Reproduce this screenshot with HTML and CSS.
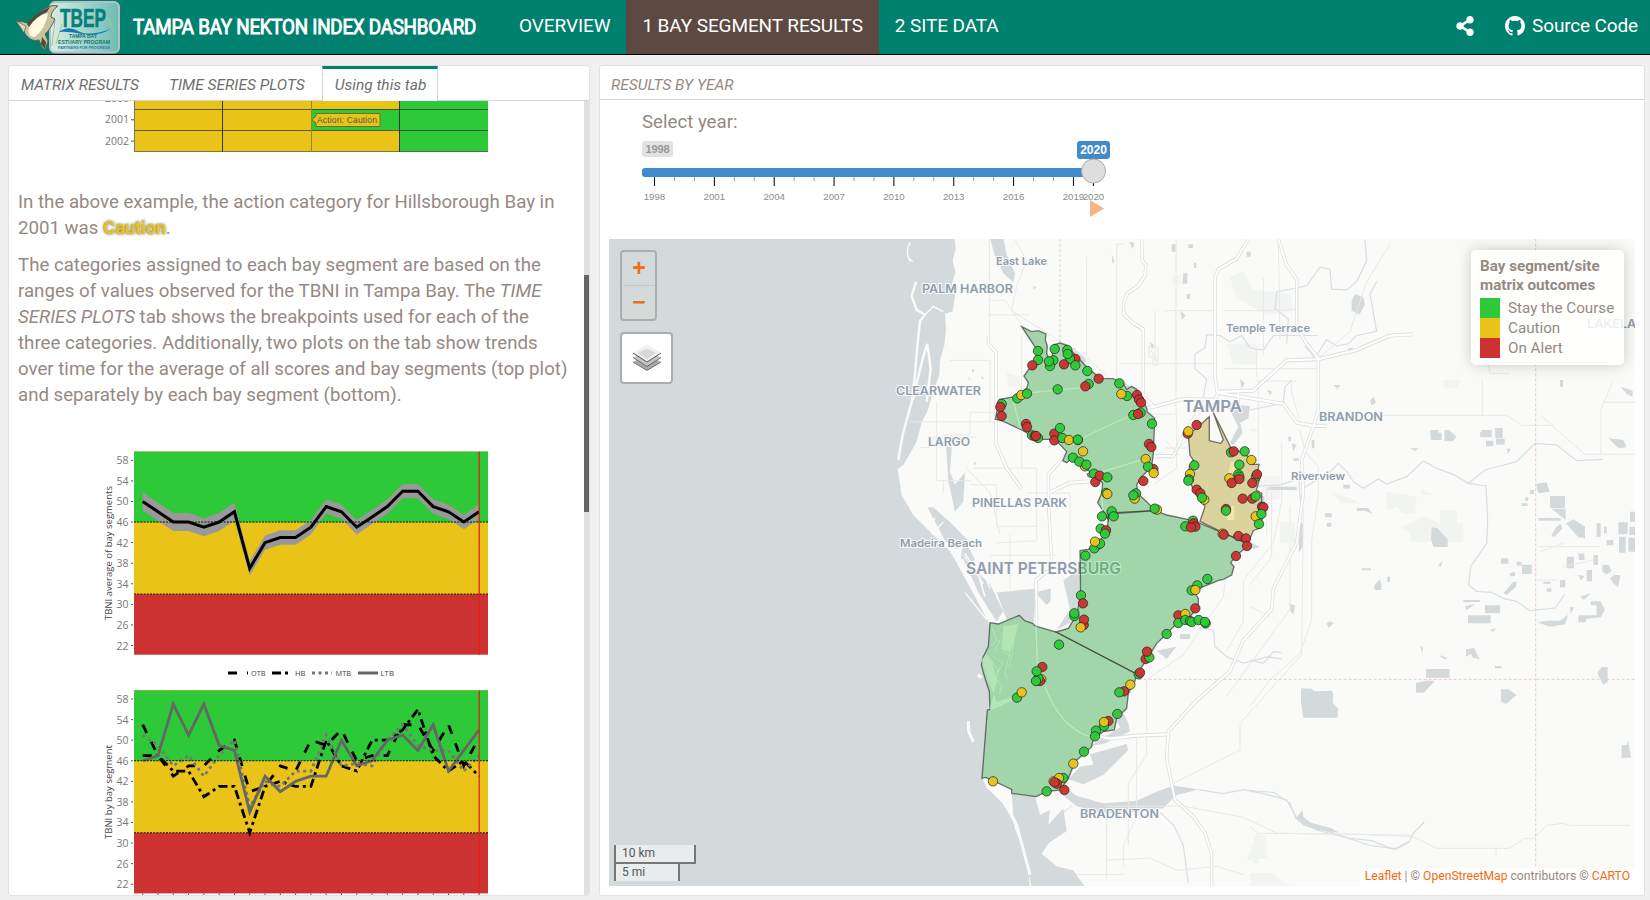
FILE: index.html
```html
<!DOCTYPE html>
<html lang="en">
<head>
<meta charset="utf-8">
<title>Tampa Bay Nekton Index Dashboard</title>
<link rel="stylesheet" href="styles.css">
</head>
<body>
<header class="navbar">
  <svg class="logo" width="106" height="54" viewBox="0 0 106 54">
    <defs><linearGradient id="badge" x1="0" x2="1"><stop offset="0" stop-color="#d9ede6"/><stop offset=".5" stop-color="#a4d6cd"/><stop offset="1" stop-color="#6cbcb4"/></linearGradient></defs>
    <rect x="35" y="2" width="69" height="50.5" rx="5" fill="url(#badge)" stroke="#b9bdc4" stroke-width="2"/>
    <path d="M37 46L40 20M41 44L47 24M98 31L92 14" stroke="#a9c58d" fill="none"/>
    <path d="M1 21L9 22L15 24Q20 14 31 8Q38 4 43 6Q36 11 36 17L40 19Q35 30 30 34L33 41L30 50Q26 47 24 40Q17 42 12 36Q8 33 10 27Z" fill="#c9c2a0" stroke="#615e4a"/>
    <path d="M14 27Q21 16 33 13Q31 28 20 37Q12 37 14 27Z" fill="#fffbe0"/>
    <path d="M12 24Q20 13 35 7L32 12Q20 17 14 27ZM27 37L31 42L30 49L26 44Z" fill="#4d4a3c"/>
    <path d="M1 21L11 26L9 33L6 28Z" fill="#ddd6b8" stroke="#615e4a" stroke-width=".6"/>
    <text x="45" y="27" class="logo-name" textLength="46" lengthAdjust="spacingAndGlyphs">TBEP</text>
    <path d="M44 32Q53 25 63 31T96 29Q82 37 67 34T44 32Z" fill="#1378b8"/>
    <text x="54" y="38" class="logo-sub" textLength="28" lengthAdjust="spacingAndGlyphs">TAMPA BAY</text>
    <text x="43" y="44" class="logo-sub" textLength="52" lengthAdjust="spacingAndGlyphs">ESTUARY PROGRAM</text>
    <text x="43" y="49" class="logo-tiny" textLength="52" lengthAdjust="spacingAndGlyphs">PARTNERS FOR PROGRESS</text>
  </svg>
  <h1 class="brand">TAMPA BAY NEKTON INDEX DASHBOARD</h1>
  <nav class="nav"><a>OVERVIEW</a><a class="active">1 BAY SEGMENT RESULTS</a><a>2 SITE DATA</a></nav>
  <div class="nav-right">
    <svg width="18" height="20" viewBox="0 0 448 512"><path fill="#fff" d="M352 320c-22.600 0-43.400 7.800-59.800 20.900l-102.500-64.100a96.600 96.600 0 0 0 0-41.600l102.500-64.100C308.600 184.200 329.400 192 352 192c53 0 96-43 96-96S405 0 352 0s-96 43-96 96c0 7.200.8 14.100 2.300 20.800l-102.500 64.100C139.400 167.800 118.600 160 96 160c-53 0-96 43-96 96s43 96 96 96c22.600 0 43.400-7.800 59.800-20.900l102.500 64.100A96.300 96.300 0 0 0 256 416c0 53 43 96 96 96s96-43 96-96-43-96-96-96z"/></svg>
    <a class="source"><svg width="20" height="20" viewBox="0 0 16 16"><path fill="#fff" d="M8 0C3.580 0 0 3.580 0 8c0 3.540 2.290 6.530 5.470 7.590.4.070.55-.17.55-.38 0-.19-.01-.82-.01-1.490-2.010.37-2.530-.49-2.690-.94-.09-.23-.48-.94-.82-1.130-.28-.15-.68-.52-.01-.53.63-.01 1.080.58 1.230.82.72 1.210 1.870.87 2.330.66.070-.52.280-.87.510-1.070-1.780-.2-3.640-.89-3.640-3.950 0-.87.31-1.590.82-2.150-.08-.2-.36-1.020.080-2.120 0 0 .67-.21 2.200.82.640-.18 1.320-.27 2-.27s1.360.09 2 .27c1.530-1.040 2.200-.82 2.200-.82.440 1.100.160 1.920.080 2.120.51.56.82 1.270.82 2.150 0 3.070-1.870 3.750-3.650 3.950.29.25.54.73.54 1.480 0 1.070-.01 1.930-.01 2.200 0 .21.150.46.550.38A8.010 8.010 0 0 0 16 8c0-4.420-3.580-8-8-8z"/></svg><span>Source Code</span></a>
  </div>
</header>
<main class="columns">
  <section class="panel guide">
    <div class="tabs"><a>MATRIX RESULTS</a><a>TIME SERIES PLOTS</a><a class="current">Using this tab</a></div>
    <div class="guide-body">
      <div class="guide-content">
        <svg class="plot" id="matrix" width="420" height="52" viewBox="90 101 420 52"></svg>
        <p class="first">In the above example, the action category for Hillsborough Bay in 2001 was <b class="caution">Caution</b>.</p>
        <p>The categories assigned to each bay segment are based on the ranges of values observed for the TBNI in Tampa Bay. The <i>TIME SERIES PLOTS</i> tab shows the breakpoints used for each of the three categories. Additionally, two plots on the tab show trends over time for the average of all scores and bay segments (top plot) and separately by each bay segment (bottom).</p>
        <svg class="plot series" id="series" width="420" height="450" viewBox="90 445 420 450"></svg>
      </div>
      <div class="scrollbar"><div class="thumb"></div></div>
    </div>
  </section>
  <section class="panel results">
    <div class="panel-title">RESULTS BY YEAR</div>
    <div class="year">
      <label>Select year:</label>
      <svg id="slider" width="480" height="84" viewBox="635 136 480 84"></svg>
    </div>
    <div class="map">
      <svg class="tiles" width="1026" height="647" viewBox="609 239 1026 647">
        <defs>
          <path id="otb" d="M185 50L215 65L235 62L258 72L256 90L262 108L260 130L268 150L278 140L276 120L284 104L300 99L320 105L345 135L380 170L420 205L460 206L490 222L500 238L515 229L530 238L545 265L560 295L562 306L584 325L580 430L575 470L545 500L530 525L535 552L560 575L585 602L465 608L445 612L445 630L428 600L413 578L425 550L428 520L415 505L385 500L382 492L392 486L365 470L340 440L320 458L308 452L320 425L285 388L235 388L185 360L120 330L106 328L115 280L118 268L165 260L200 235L205 218L192 198L205 180L230 150L228 115Z"/>
          <path id="hb" d="M748 320V392L782 400L790 390L760 308L812 412L850 430L880 450L879 463L897 463L892 490L898 510L889 540L905 550L905 590L916 602L897 655L880 662L868 690L860 702L720 634L735 590L700 540L685 500L688 470L700 450L690 436L685 375Z"/>
          <path id="mtb" d="M445 42L585 32L620 45L700 62L865 130L862 140L830 165L812 188L822 200L815 225L790 238L780 240L700 272L715 295L715 320L690 350L650 370L620 402L590 430L560 480L530 522L288 396L325 385L350 345L362 290L360 152L385 148L400 138L430 110L443 80Z"/>
          <path id="ltb" d="M90 368L115 372L178 346L195 363L218 370L225 378L288 396L530 522L524 545L505 580L500 625L470 655L463 690L430 695L400 715L395 740L345 785L325 835L300 870L260 875L228 890L155 880V868L78 832L66 835L82 630L90 628L88 575L75 535L64 495L70 470L85 440Z"/>
          <g id="highways">
            <path d="M1075 8L1040 55L985 80L975 100V340L982 378"/>
            <path d="M1165 8L1190 70L1220 105V220L1250 260L1285 295V420L1270 460L1235 540L1240 620L1220 740L1150 850L1145 900L1060 975L1020 1050L920 1120L835 1195L830 1260L855 1360L910 1400L945 1440L965 1490V1568"/>
            <path d="M1570 237L1500 240L1400 275L1285 297L1190 300L1090 373L985 376L975 395L880 393L800 410L770 415M795 531H850L880 480L920 430L975 395"/>
            <path d="M755 8L757 60L768 70L765 95L745 120L712 138L700 165L703 190L730 210L760 225V385L790 410"/>
            <path d="M295 240V260L318 280V500L350 560L395 610"/>
            <path d="M530 525L475 575V640L485 780M475 620L540 595L600 592"/>
            <path d="M440 940L438 830L470 810L510 805"/>
            <path d="M982 378L1180 405L1220 450L1270 458L1310 458M1045 376V410"/>
            <path d="M615 1205L660 1212L740 1205L830 1202"/>
          </g>
        </defs>
        <rect class="land" x="609" y="239" width="1026" height="647"/>
        <g transform="translate(890 236) scale(.33333 .41465)">
          <g class="parks">
            <path d="M1020 100L1060 85L1090 130L1200 140L1210 180L1130 190L1040 150Z"/><path d="M1100 1440L1130 1450V1500L1070 1505ZM845 95h28v22h-28zM1010 260h90v50h-70zM350 330l40 10v20l-35 5zM1120 580h50v55h-45z"/>
          </g>
          <g class="water">
            <path d="M-850 0H193L197 30L188 60L197 88L185 115L196 140L188 182L165 187L168 225L163 263L150 300L148 335L130 375L112 423L95 450L80 496L40 552L23 562L35 625L70 673L130 721L180 760L195 781L250 862L295 930L300 945V1145L277 1308L290 1330L340 1370L368 1405L375 1430L395 1470L415 1530L420 1580H-850Z"/>
            <path d="M300 5H340L350 45L375 90L370 112L340 90L315 50ZM113 655L130 655L180 690L235 735L200 755L165 735ZM168 505L185 510L180 570L195 600L225 570L220 640L195 665L175 590ZM225 735L255 780L240 790L215 760ZM215 770L250 800L300 840L340 905L320 930L300 905L265 860ZM320 860L440 850L430 940L350 925ZM520 830L575 800V880L545 930L500 950L540 900ZM435 860L482 850V880L470 890Z"/>
            <path d="M500 1315L560 1350L640 1368L740 1362L800 1340L850 1325L925 1335L860 1348L820 1380L740 1390L640 1392L560 1375L520 1350Z"/>
            <path d="M365 1345L435 1352L450 1395L480 1385L475 1420L520 1380L530 1435L475 1465L455 1490L500 1520L550 1530L585 1570H425L400 1480L370 1400Z"/>
            <path d="M535 1310L570 1280L610 1275L600 1250L710 1225L715 1240L640 1300L580 1322ZM600 1230L690 1185L680 1170L700 1150L715 1175L720 1195L640 1225Z"/>
            <path d="M1010 405L1080 410L1075 440L1050 450L1058 475L1030 505L1020 498L1045 460ZM550 268L590 300L570 322L540 290ZM1385 155L1395 140L1420 148L1425 165L1408 190L1385 180ZM690 340L720 365L700 375ZM800 1000L860 990L830 1020ZM870 960h30v12h-30zM1100 615L1125 630L1115 650ZM640 570L655 580L650 600L635 595ZM1075 735L1110 750L1090 755Z"/>
            <path d="M1235 1090L1265 1095L1268 1100L1330 1102L1328 1125L1345 1140L1342 1162H1240L1233 1125Z"/>
            <path d="M665 42l8 20-6 5zM718 14l15 3-5 15zM845 20h12v18h-12zM880 90h12v25h-15zM890 140h10v12h-10zM872 180l15 12-12 10zM912 65h7v12h-7zM895 20h14v9h-14zM1070 38h12v12h-12zM780 255l14 9-8 10zM1050 345l14 10-9 14zM1195 885l20 6-9 20zM1310 935l10-5 4 10-8 5zM1455 840l16-12v22zM1375 270h14v9h-14zM1205 500l15 4-10 16zM1360 600h20v9h-20zM430 120l10 4-9 5zM245 320l8 3-4 8zM272 338l9 2-2 7zM235 340l5 2-2 7zM250 545l9 2-2 6zM215 760l9 14-11 8zM1130 370l16 5-5 10z"/>
          </g>
          <g class="shore">
            <path d="M78 110L65 145L80 178L105 190L90 205L82 265L75 335L65 400L38 480L25 540" stroke-width="2.500"/>
            <path d="M68 395L100 290L112 260L122 320L110 400" stroke-width="2.500"/>
            <path d="M235 1170L236 1195L250 1220M275 1065L264 1058M285 1310L340 1362L380 1420L400 1480L420 1540" stroke-width="3"/>
            <path d="M53 50L68 62M60 15Q45 35 60 62M105 190L130 170L160 182M265 775L300 850M255 790L285 870M225 765L280 840M110 705L135 680M125 720L160 690M225 860L290 925" stroke-width="1.500"/>
          </g>
          <g class="rivers"><path d="M1245 265L1275 295L1310 250L1340 265L1375 260L1400 240L1460 230L1440 140L1460 110M1425 8L1430 60L1400 110L1370 130L1325 128L1320 80L1290 75L1250 120L1160 135L1155 175L1195 200L1190 260M1285 240L1150 240L1120 275L1080 270L1055 240L1020 255L990 240L950 238L945 270L915 285V320L950 345L940 390M925 945L970 950L975 990L1010 1015L1060 1030L1130 1015L1175 1020M925 1335L1000 1345L1060 1335L1120 1345L1190 1360L1225 1410L1330 1440L1440 1470L1520 1478L1560 1460M810 1390L850 1420L880 1470L895 1560M1080 605L1170 600L1210 590M1225 570L1235 680M520 1390L545 1375"/></g>
          <g class="minor"><path d="M375 8L410 60L380 120L365 180L600 300L660 345M300 155H345L400 220M295 190H420M298 8V240M395 240V560M590 50V290M700 20H680V345M858 8V430M825 180H975M690 308H975M690 430H860V560L790 600M795 180V300M1120 100V290M1165 8L1170 250M1000 180H1120L1220 178M1000 320H1280M1100 350H1220M1100 270V340M1175 500V640L1150 740L1060 830V930L1010 1000M770 1070L880 1010L1000 870L1020 740M770 1070V1250L715 1320V1470M740 1205V1400L700 1470V1520M320 425H240V480H160M60 448H320M140 400V590H245M90 510H120L130 485H260M180 300H300V450M240 600H320V700H440M160 590V620M250 560H400M230 560L300 620L330 720M320 740L440 735V560H400M300 770H500M360 720V850M600 430V520M410 620H540V780M1560 1445L1410 1443L1160 1440L1060 1402L880 1375H650M650 1400V1550M650 1505L780 1500L860 1530L980 1520L1060 1540M1285 295L1380 230L1430 110L1500 20M1200 650V900L1010 1110M1050 1180V1240L850 1320M1050 1175L1235 1010L1240 660M960 690L1060 725M560 1540H700M1010 600H1130V720"/></g>
        </g>
        <g transform="translate(1250 380) scale(.33333)">
          <g class="parks"><path d="M410 335L500 350L495 400H460L440 380L410 390ZM455 440L520 410L570 430V390H620V430H640V485H480V460ZM90 425H135V490H90ZM515 325L550 345H510ZM250 340l50 15 30 15h-60zM580 0h50l-10 25h-40zM0 1400l30 50h-20zM0 1480H70L120 1518H0Z"/></g>
          <g class="water"><path d="M540 150h25v8h10v22h-32zM583 150h14l22 20-10 14h-26zM690 158l8-8h27v22h-34zM735 144h23v31h-22zM737 176h27v18h-25zM708 182h22v17h-22zM545 441L562 445L593 478V501H550L543 478ZM858 312L890 307L899 335L865 340ZM900 348H945V384H900ZM905 386H947V420L932 408ZM865 414H932V422H865ZM948 430L970 418L1005 440V475L985 472ZM705 676H750V700H705ZM654 706H722V730H654ZM528 867H599V893H528ZM498 908L530 902H555L522 938H498ZM648 808L672 804L689 838L670 834L662 822L648 830ZM753 928H775L800 945L768 972L753 965ZM1042 880L1055 861H1073V905L1060 914ZM1115 1095H1130L1134 1083L1144 1133H1115ZM153 926H185L192 934L247 932L241 968L263 985V1012H166L158 1002V970H153ZM138 1315L157 1290L160 1310L182 1328L245 1345L268 1358L200 1350L160 1336ZM985 706H1040V676H1022V664H1052L1065 690L1052 712L1010 716L1005 727H985ZM862 727L895 722H930L955 704L945 733L900 740ZM760 640L790 605H800L798 620L770 645ZM816 554H845V582H816ZM1057 555h20l8 18-14 10-14-7zM1080 595l12-10h20l-8 37-15-14zM1105 427h28v36h-28zM1140 395h15v30h-15zM1138 440h17v25h-17zM1107 470h20v48h-20zM1135 473h20v42h-20zM985 520l18 2v18h-16zM950 530h22v35h-22zM753 535h22v16h-22zM360 60l12-10 5 18-12 8zM1112 20L1148 32V50L1130 42ZM1075 175l45 5 10 22-25 3zM320 384h35l12 18-20-10-27 2zM225 400h20v12h-20zM230 428h14v12h-14zM372 618l12-14 10 6v20h-20zM230 730l10-6 12 6-12 9zM412 590h8v16h-8zM120 690l15-12-5 24zM720 750l18-6-8 12zM250 15h22l-10 12zM480 205h25l-10 8zM565 555l13-12-6 18zM510 795l10 10-4 14zM567 825l25 8-8 6zM335 565h28v6h-28zM840 330h12v12h-12zM815 370h18v8h-18zM825 352h10v10h-10zM770 205l12 2-8 16zM920 440l12-8 5 14-25 26-8-6zM1040 430h12v40h-12zM1062 440h8v20h-8zM1070 480h20v16h-20zM1030 525h14v30h-14zM880 605h22v6h-22zM890 625h14v10h-14zM930 600h16v22h-16zM1010 570h16v34h-16zM985 585l18 3-10 14zM960 680l12 3-10 18zM990 650l32-10-20 20zM800 545h15v12h-15zM780 580l15-5v14h-15zM640 660h50v6h-50zM645 678l30-5-26 18zM735 858h20v7h-20zM930 0h9v20h-9zM60 320h80v10h-90zM130 235h16v8h-16zM185 180h8v25h-8zM115 170h8v14h-8zM150 430h8v70l-12 20z"/></g>
          <g class="rivers"><path d="M160 325L200 300L240 275L265 250L290 275L310 305L340 325L385 297L410 312L470 290L520 243L560 265L610 283L655 310L708 318L713 420L710 490L662 560L656 615L680 634L725 637L760 655L800 664L840 692L915 684L945 642M655 310L705 270L760 255L800 245L855 190L920 195L980 242L1057 238M0 1232L70 1237L120 1270L138 1315L200 1350L290 1374L365 1382L430 1408L478 1385L490 1360L523 1326M0 840L40 850L70 815L95 818M0 90L60 78L100 70L105 20L125 0"/></g>
          <g class="minor"><path d="M398 106H770L815 136H905L1005 223H1155M697 0V106M1053 223V90L1090 0M1060 67H1155M875 110L910 138M0 1340L25 1360L320 1363L490 1370L560 1405H778L820 1376H850L890 1336L940 1330L960 1336H1140M150 150L165 215L205 260V350L185 480V720L150 820L60 900L0 980M25 0V300L65 330V530L0 615M0 150H25M125 0V40L150 120M738 1405V1430M860 500H1050M870 515L940 490M860 600H920M940 560L1030 540M0 680L60 710M682 -375L690 -260L712 -70L720 -20H780"/></g>
          <path class="county" d="M857 -425V1460M860 898H1155M860 898H-340"/>
        </g>
        <path class="county" d="M1060 239V343"/>
        <g transform="translate(890 236) scale(.33333 .41465)"><use href="#highways" class="casing"/><use href="#highways" class="road"/></g>
        <g class="airport"><path d="M1149 347h9v18h-5v-8h-4zM1151 350l6 12M1165 440l14 15M1190 437l-20 20M1165 448h22M1025 395h12v6h-12z"/></g>
        <g class="bay">
          <g transform="translate(960 310) scale(.33333)"><use href="#otb"/><use href="#hb"/></g>
          <g transform="translate(960 500) scale(.33333)"><use href="#mtb"/><use href="#ltb"/></g>
        </g>
        <g class="places">
          <text class="town" x="996" y="265" textLength="51" lengthAdjust="spacingAndGlyphs">East Lake</text><text x="922" y="293" textLength="91" lengthAdjust="spacingAndGlyphs">PALM HARBOR</text>
          <text class="town" x="1226" y="332" textLength="84" lengthAdjust="spacingAndGlyphs">Temple Terrace</text><text x="896" y="395" textLength="85" lengthAdjust="spacingAndGlyphs">CLEARWATER</text>
          <text x="928" y="446" textLength="42" lengthAdjust="spacingAndGlyphs">LARGO</text><text x="972" y="506.500" textLength="95" lengthAdjust="spacingAndGlyphs">PINELLAS PARK</text>
          <text class="town" x="900" y="547" textLength="82" lengthAdjust="spacingAndGlyphs">Madeira Beach</text><text class="city" x="966" y="573.500" textLength="155" lengthAdjust="spacingAndGlyphs">SAINT PETERSBURG</text>
          <text class="city" x="1183" y="412" textLength="59" lengthAdjust="spacingAndGlyphs">TAMPA</text><text x="1319" y="420.500" textLength="64" lengthAdjust="spacingAndGlyphs">BRANDON</text>
          <text class="town" x="1291" y="480" textLength="54" lengthAdjust="spacingAndGlyphs">Riverview</text><text x="1080" y="817.500" textLength="79" lengthAdjust="spacingAndGlyphs">BRADENTON</text><text x="1587" y="327.500" textLength="68" lengthAdjust="spacingAndGlyphs">LAKELAND</text>
        </g>
        <g class="segments">
          <g transform="translate(960 310) scale(.33333)"><use href="#otb" class="stay"/><use href="#hb" class="warn"/></g>
          <g transform="translate(960 500) scale(.33333)"><use href="#mtb" class="stay"/><use href="#ltb" class="stay"/></g>
        </g>
        <g class="shoals" transform="translate(960 500) scale(.33333)"><path d="M228 378L232 490M255 560Q300 680 388 710M92 628L160 598"/><path class="flat" d="M88 628L100 620L160 597V590L110 605L90 555L70 500L66 480L78 462L95 480L110 540L100 590ZM130 380l45-8-5 25-20 60-25-10zM640 370l15-12 5 15z"/><path class="reef" d="M95 380L110 420L92 440M135 380L125 450L150 470M150 455L135 520L142 535M100 470L130 490L110 520M165 385L160 440L148 500M85 470L115 510L105 560M120 420L105 450M112 540l14 20-8 22"/></g>
        <g class="shoals" transform="translate(960 310) scale(.33333)"><path d="M330 410Q345 390 510 318M215 248L395 230M160 272L182 355M395 495L550 448M425 545L428 600"/><path class="sand" d="M812 455h12v35h-20zM805 588h18v42h-22z"/></g>
        <g id="sites"></g>
      </svg>
      <div class="zoom"><span>+</span><span>−</span></div>
      <div class="layers"><svg width="30" height="30" viewBox="0 0 30 30"><path d="M1 19L15 27.500L29 19L15 12Z" fill="#aaa"/><path d="M1 19L15 27.500L29 19" fill="none" stroke="#555" stroke-width=".8"/><path d="M1 14.500L15 23.500L29 14.500L15 8Z" fill="#c4c4c4"/><path d="M1 14.500L15 23.500L29 14.500" fill="none" stroke="#555" stroke-width=".8"/><path d="M1 10L15 19L29 10L15 1.500Z" fill="#f0f0f0"/><path d="M6 10L15 5.500L24 10L15 16Z" fill="#d8d8d8"/><path d="M1 10L15 19L29 10" fill="none" stroke="#444" stroke-width=".9"/></svg></div>
      <div class="scale"><div class="km">10 km</div><div class="mi">5 mi</div></div>
      <div class="legend"><strong>Bay segment/site<br>matrix outcomes</strong>
        <div><i class="sw-green"></i>Stay the Course</div><div><i class="sw-yellow"></i>Caution</div><div><i class="sw-red"></i>On Alert</div></div>
      <div class="credit"><a>Leaflet</a> | © <a>OpenStreetMap</a> contributors © <a>CARTO</a></div>
    </div>
  </section>
</main>
<script src="script.js"></script>
</body>
</html>
```
FILE: styles.css
```css
* { box-sizing: border-box; }
body { margin: 0; height: 900px; overflow: hidden; background: #f0f0f0; font-family: Roboto, "Liberation Sans", sans-serif; color: #958984; }
.navbar { height: 55px; display: flex; align-items: center; background: #00806e; border-bottom: 1px solid #000; color: #fff; padding-left: 15px; }
.logo { flex: none; margin-right: 12px; }
.logo-name { font: bold 25px "Liberation Sans", sans-serif; fill: #087f78; stroke: #087f78; stroke-width: .6; }
.logo-sub { font: bold 5.500px "Liberation Sans", sans-serif; fill: #11746e; }
.logo-tiny { font: bold 3.500px "Liberation Sans", sans-serif; fill: #3277a8; }
.brand { font-size: 20.500px; font-weight: 400; -webkit-text-stroke: .9px #fff; margin: 0; width: 370px; white-space: nowrap; letter-spacing: -.25px; line-height: 53px; transform: scaleX(.915); transform-origin: left; }
.nav { display: flex; height: 54px; }
.nav a { padding: 0 16px; font-size: 19px; line-height: 51px; letter-spacing: -.1px; white-space: nowrap; }
.nav .active { background: #5c4a42; }
.nav-right { margin-left: auto; display: flex; gap: 31px; align-items: center; padding-right: 12px; }
.nav-right svg { margin-bottom: 2px; }
.source { display: flex; gap: 7px; align-items: center; font-size: 19px; letter-spacing: -.15px; white-space: nowrap; }
.source span { margin-bottom: 3px; }
.columns { display: flex; gap: 9px; padding: 10px 5px 0 8px; }
.panel { height: 831px; background: #fff; border: 1px solid #e2e2e2; border-radius: 3px; display: flex; flex-direction: column; overflow: hidden; }
.guide { width: 582px; flex: none; }
.tabs { height: 35px; flex: none; display: flex; font-size: 15.500px; font-style: italic; line-height: 38px; color: #6f6f6f; border-bottom: 1px solid #d6d6d6; }
.tabs a { padding: 0 12px; margin-right: 6px; white-space: nowrap; }
.tabs .current { height: 35px; margin: 0 0 0 -1px; background: #fff; border: 1px solid #d6d6d6; border-top: 3px solid #00806e; border-bottom: 0; line-height: 32px; padding: 0 11px 0 12px; }
.guide-body { flex: 1; min-height: 0; display: flex; }
.guide-content { width: 575px; padding-left: 9px; overflow: hidden; }
.plot { display: block; margin-left: 72px; }
.guide p { margin: 0 0 11px; width: 556px; font-size: 18.670px; line-height: 26px; }
.guide p.first { margin-top: 36px; }
.series { margin-top: 37px; }
.caution { color: #e9c318; text-shadow: 0 0 3px #555; letter-spacing: -.3px; }
.scrollbar { width: 5px; background: #e0e0e0; padding-top: 174px; }
.thumb { height: 237px; background: #666; }
.results { width: 1046px; flex: none; }
.panel-title { height: 34px; flex: none; border-bottom: 1px solid #d6d6d6; padding-left: 11px; font-size: 15.500px; font-style: italic; line-height: 38px; }
.year { height: 139px; padding: 11px 0 0 35px; }
.year label { display: block; margin-left: 7px; height: 25px; font-size: 18.670px; line-height: 22px; }
.year svg { display: block; }
.map { position: relative; width: 1026px; height: 647px; margin-left: 9px; overflow: hidden; }
.tiles { display: block; }
.land { fill: #fafaf8; }
.water path { fill: #d4dadc; }
.parks path { fill: #f2f4f1; }
.shore path { fill: none; stroke: #fafaf8; vector-effect: non-scaling-stroke; }
.rivers path { fill: none; stroke: #d6dfe4; stroke-width: 1.200px; vector-effect: non-scaling-stroke; }
.minor path { fill: none; stroke: #e8e9e8; stroke-width: 1px; vector-effect: non-scaling-stroke; }
.county { fill: none; stroke: #e8cbd0; stroke-width: 1px; stroke-dasharray: 3 2; vector-effect: non-scaling-stroke; }
.casing, .road { fill: none; stroke-linejoin: round; }
.casing { stroke: #dddede; stroke-width: 10px; }
.road { stroke: #fff; stroke-width: 5.500px; }
.airport path { fill: none; stroke: #e6e7e7; }
.bay use { fill: #d4dadc; }
.places text { font: 600 11.500px Inter, "Open Sans", sans-serif; fill: #8e9dac; stroke: #fafaf8; stroke-width: 2px; paint-order: stroke; }
.places .town { font-size: 11px; }
.places .city { font-size: 16.500px; }
.segments use { stroke: #333; stroke-opacity: .65; stroke-width: 4px; }
.stay { fill: #2dc938; fill-opacity: .3; }
.warn { fill: #e9c318; fill-opacity: .32; }
.shoals path { fill: none; stroke: #bbe9bb; stroke-width: 4px; }
.shoals .flat { fill: #b5e5b4; stroke: none; }
.shoals .reef { stroke: #b5e5b4; stroke-width: 3px; }
.shoals .sand { fill: #f2e5ab; stroke: none; }
.zoom { position: absolute; left: 11px; top: 11px; width: 37px; height: 71px; border: 2px solid #a9aeb0; border-radius: 4px; color: #ee6d12; font: bold 23px/32px "Liberation Sans", sans-serif; text-align: center; padding-left: 1px; }
.zoom span { display: block; height: 33px; }
.zoom span + span { border-top: 1px solid #c3c8ca; }
.layers { position: absolute; left: 11px; top: 93px; width: 53px; height: 52px; border: 2px solid #a9aeb0; border-radius: 4px; background: #fff; display: flex; align-items: center; justify-content: center; }
.scale { position: absolute; left: 5px; bottom: 5px; font-size: 12px; color: #555; line-height: 16px; }
.scale div { border: 2px solid #777; background: rgba(255,255,255,.5); padding-left: 6px; border-top: 0; }
.km { width: 82px; height: 19px; }
.scale .mi { width: 66px; height: 19px; margin-top: -2px; border-top: 2px solid #777; border-bottom: 0; line-height: 17px; }
.legend { position: absolute; left: 862px; top: 11px; width: 153px; height: 115px; padding: 7px 9px; border-radius: 5px; background: rgba(255,255,255,.84); box-shadow: 0 0 15px rgba(0,0,0,.2); font-size: 15.200px; line-height: 19px; white-space: nowrap; }
.legend strong { display: block; height: 41px; }
.legend div { display: flex; line-height: 20px; height: 20px; }
.legend i { width: 20px; height: 20px; margin-right: 8px; }
.sw-green { background: #2dc938; } .sw-yellow { background: #e9c318; } .sw-red { background: #cc3231; }
.credit { position: absolute; right: 0; bottom: 0; height: 18px; padding: 0 5px; background: rgba(255,255,255,.7); font-size: 12.150px; line-height: 17px; white-space: nowrap; }
.credit a { color: #ee6d12; }
.axis { font: 10.500px "Open Sans", sans-serif; fill: #777; }
.axis-title { font: 9.500px "Open Sans", sans-serif; fill: #444; }
.key { font: 7px "Open Sans", sans-serif; fill: #444; }
.hover { font: 8.500px "Liberation Sans", sans-serif; fill: #555; }
.tick-label { font: 9.700px "Liberation Sans", sans-serif; fill: #8c8c8c; }
.slider-min { font: bold 11px "Liberation Sans", sans-serif; fill: #999; }
.slider-value { font: bold 12px "Liberation Sans", sans-serif; fill: #fff; }
```
FILE: script.js
```js
const GREEN = '#2dc938', YELLOW = '#e9c318', RED = '#cc3231';
const put = (id, html) => { document.getElementById(id).innerHTML = html; };
const rect = (x, y, w, h, f, extra = '') => `<rect x="${x}" y="${y}" width="${w}" height="${h}" fill="${f}" ${extra}/>`;
const line = (x1, y1, x2, y2, s, w = 1, extra = '') => `<path d="M${x1} ${y1}L${x2} ${y2}" stroke="${s}" stroke-width="${w}" ${extra}/>`;
const text = (x, y, s, c, extra = '') => `<text x="${x}" y="${y}" class="${c}" ${extra}>${s}</text>`;

// Category matrix
let m = rect(134, 95, 266, 57, YELLOW) + rect(399.5, 95, 88.5, 57, GREEN) + rect(311, 109, 89, 21, GREEN);
[109.5, 130.5].forEach(y => m += line(134, y, 488, y, '#333', 1, 'opacity=".75"'));
m += line(134, 151.5, 488, 151.5, '#555', 1, 'opacity=".7"');
m += line(134.5, 95, 134.5, 152, '#777') + line(222.5, 95, 222.5, 152, '#333') + line(311.5, 95, 311.5, 152, '#9b851d') + line(399.5, 95, 399.5, 152, '#333');
['2000', '2001', '2002'].forEach((t, i) => m += text(129, 102 + i * 21.3, t, 'axis', 'text-anchor="end"') + line(131, 98.5 + i * 21.3, 134, 98.5 + i * 21.3, '#555'));
m += `<path d="M312 120L316 116V113.500H380V126.500H316V123Z" fill="${YELLOW}" stroke="#7a6a2a"/>` + text(317, 123, 'Action: Caution', 'hover', 'textLength="60"');
put('matrix', m);

// Time series
const X = i => 142.7 + i * 15.29;
const Y = (v, o) => 460.3 + o + (58 - v) * 5.145;
const pts = (a, o) => a.map((v, i) => `${X(i)} ${Y(v, o)}`);
const avg = [50,48,46,46,45,46,48,37,42,43,43,45,49,48,45,47,49,52,52,49,48,46,48];
const groups = [
  { v: [53,47,43,45,45,48,50,40,41,45,44,50,49,52,46,47,47,53,53,48,53,45,50.5], c: '#000', d: '9 10' },
  { v: [47,47,44,44,39,41,41,32,41,42,41,41,50,45,44,50,50,52,56,47,44,46,43], c: '#000', d: '9 4 3 4' },
  { v: [51,49,45,47,43,47,50,37,42,41,44,44,51,45,45.5,45,50,53,49,48,48,44,47], c: '#777', d: '3 3.5' },
  { v: [46,47,57,51,57,49,48,36,43,40,42,43,43,50,45,46,50,51,48,53,44,48,52], c: '#666', d: 'none' }
];
const frame = o => {
  let s = rect(134, 451.7 + o, 354, 203, RED) + rect(134, 451.7 + o, 354, 142.5, YELLOW) + rect(134, 451.7 + o, 354, 70.5, GREEN);
  for (let v = 58; v >= 22; v -= 4) s += text(128.5, Y(v, o) + 4, v, 'axis', 'text-anchor="end"') + line(131, Y(v, o), 133, Y(v, o), '#555');
  return s;
};
const guides = o => [46, 32].map(v => line(134, Y(v, o), 488, Y(v, o), '#111', 1, 'stroke-dasharray="2 1.2"')).join('') + line(479.2, 451.7 + o, 479.2, 654.7 + o, '#e32018', 1.3);
let s = frame(0);
s += `<path d="M${avg.map((v, i) => `${X(i)} ${Y(v + (i < 7 ? 1.75 : 1.4), 0)}`).join('L')}L${avg.map((v, i) => `${X(i)} ${Y(v - (i < 7 ? 1.75 : 1.4), 0)}`).reverse().join('L')}Z" fill="#999"/>`;
s += `<path d="M${pts(avg, 0).join('L')}" fill="none" stroke="#000" stroke-width="3"/>` + guides(0);
s += text(0, 0, 'TBNI average of bay segments', 'axis-title', 'transform="translate(112 620) rotate(-90)" textLength="134"');
s += frame(238.7);
groups.forEach(g => s += `<path d="M${pts(g.v, 238.7).join('L')}" fill="none" stroke="${g.c}" stroke-width="2.8" stroke-dasharray="${g.d}"/>`);
s += guides(238.7);
s += text(0, 0, 'TBNI by bay segment', 'axis-title', 'transform="translate(112 839) rotate(-90)" textLength="94"');
[['OTB', 228, 251, 14.5], ['HB', 272, 295, 10.5], ['MTB', 312, 335.5, 15.5], ['LTB', 358, 380.5, 13.5]].forEach(([t, x, tx, w], i) => {
  s += line(x, 673, x + 20, 673, groups[i].c, 3, `stroke-dasharray="${groups[i].d}"`) + text(tx, 675.5, t, 'key', `textLength="${w}" lengthAdjust="spacingAndGlyphs"`);
});
for (let i = 0; i < 23; i++) s += line(X(i), 893.5, X(i), 895, '#444');
put('series', s);

// Year slider
let t = rect(642, 141, 31, 16, '#e2e2e2', 'rx="3"') + text(657.5, 153, '1998', 'slider-min', 'text-anchor="middle" textLength="24"');
for (let i = 0; i < 23; i++) {
  const major = i % 3 === 0 || i === 22, x = 654.5 + i * 19.95;
  t += line(x, 177, x, major ? 186 : 181, major ? '#000' : '#999');
  if (major) t += text(x, 200, 1998 + i, 'tick-label', 'text-anchor="middle" textLength="21.500"');
}
t += rect(642, 168, 454, 9, '#428bca', 'rx="3"');
t += rect(1077, 141, 33, 18, '#428bca', 'rx="3"') + text(1093.5, 154, '2020', 'slider-value', 'text-anchor="middle"');
t += '<circle cx="1093.500" cy="171" r="12" fill="#dedede" stroke="#aaa"/><path d="M1090 200L1104 208.500L1090 217Z" fill="#f5b485"/>';
put('slider', t);

// Monitoring sites, grouped by map sheet
const north = 'g234,123 g234,150 r217,166 g284,117 g322,120 g280,151 g270,168 g267,154 r346,147 g330,147 g323,132 r312,163 g346,166 g382,183 g386,222 r376,229 r416,206 g293,238 g478,220 g501,258 y484,252 r531,255 r537,269 r543,278 g172,265 y184,255 g201,251 g125,282 r121,291 r125,318 r198,342 r201,351 g216,376 g234,384 r224,378 r228,378 r283,371 g300,354 r283,391 g307,384 y327,390 g354,390 g353,389 y369,424 g576,341 g520,315 g542,308 r534,312 r567,402 r574,411 y557,447 r580,477 g564,470 y581,489 r550,513 g339,443 y375,469 g358,455 g379,464 g402,491 r406,516 r419,497 g442,502 g438,549 y442,552 g528,550 y524,566 g520,556 y591,599 g584,596 g455,604 g426,619 g461,619 g422,656 r438,661 g435,671 r710,345 r683,371 y685,364 g703,466 y690,492 g687,508 g685,512 r710,539 r721,550 y733,569 g726,563 g813,427 r821,424 g854,424 y874,450 g838,464 g835,493 y808,505 r815,519 g838,500 r838,507 g888,500 r891,493 r877,519 r848,566 r877,566 g887,559 r906,590 r910,592 y887,619 g904,612 g897,642 r798,597 g798,602 g676,649 g699,632 r701,640 r706,650 r693,652 y788,671 r791,674 r835,678 r858,685 r861,708';
const south = 'g412,135 g403,145 g420,131 y405,125 g376,167 r828,168 g742,237 g712,256 g695,271 y706,270 r706,325 g363,286 r369,310 g343,348 g343,340 r371,375 r372,359 y362,382 r655,346 y676,342 g655,369 g676,360 g690,363 g695,366 g716,360 g737,370 g735,366 g620,402 g297,434 r557,477 g568,472 r561,455 g536,523 r540,518 y511,554 r492,574 g478,577 r247,501 y244,538 r240,543 g235,535 g230,514 g228,543 g171,593 y185,577 g472,642 r445,663 g432,678 y432,666 g408,692 g405,709 g372,755 y340,791 g310,834 y281,844 y297,834 r291,851 r284,847 g260,874 r313,870 y99,844';
const fill = { g: GREEN, y: YELLOW, r: RED };
const dots = (list, oy) => list.split(' ').map(d => {
  const [x, y] = d.slice(1).split(',').map(Number);
  return `<circle cx="${960 + x / 3}" cy="${oy + y / 3}" r="4.700" fill="${fill[d[0]]}" fill-opacity=".97" stroke="#222" stroke-opacity=".7"/>`;
}).join('');
put('sites', dots(north, 310) + dots(south, 500));
```
